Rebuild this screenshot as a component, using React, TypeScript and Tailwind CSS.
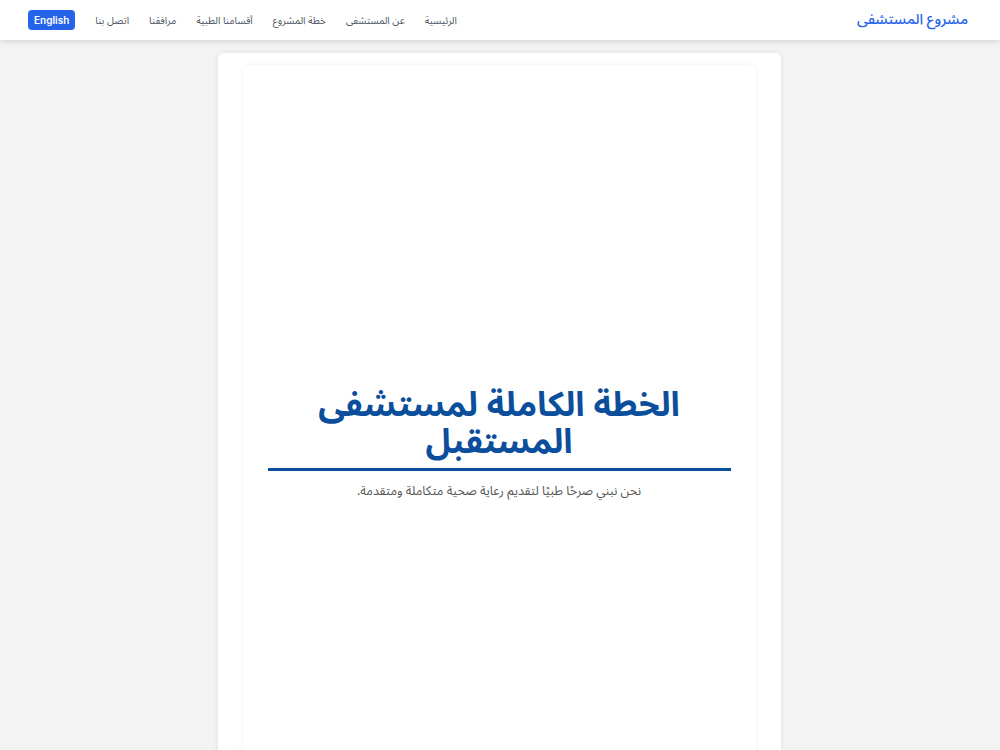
const links = ['الرئيسية', 'عن المستشفى', 'خطة المشروع', 'أقسامنا الطبية', 'مرافقنا', 'اتصل بنا'];

export default function App() {
  return (
    <div
      dir="rtl"
      className="min-h-screen bg-[#f3f3f3]"
      style={{ fontFamily: '"Noto Sans Arabic", "Noto Sans Arabic UI", "Noto Naskh Arabic", "DejaVu Sans", sans-serif' }}
    >
      <header className="h-10 bg-white shadow-[0_2px_6px_rgba(0,0,0,0.12)] flex items-center justify-between pr-8 pl-7 relative z-10">
        <a className="text-[14.5px] font-medium text-[#2563eb]">مشروع المستشفى</a>
        <div className="flex items-center">
          <nav className="flex items-center gap-5 ml-5">
            {links.map((l) => (
              <a key={l} className="text-[10px] text-[#4b5563]">
                {l}
              </a>
            ))}
          </nav>
          <button
            dir="ltr"
            className="h-5 px-[6px] rounded bg-[#2563eb] text-white text-[10px] font-semibold"
            style={{ fontFamily: 'Inter, "Liberation Sans", sans-serif' }}
          >
            English
          </button>
        </div>
      </header>
      <main className="flex justify-center pt-[13px]">
        <div className="w-[563px] -translate-x-[1px] bg-white rounded-md shadow-[0_0_6px_rgba(0,0,0,0.08)] px-[25px] pt-[12px]">
          <section className="min-h-[760px] rounded-md bg-white shadow-[0_0_5px_rgba(0,0,0,0.06)] flex flex-col items-center justify-center px-[25px] pb-[4px]">
            <h1 className="w-full text-center text-[34px] leading-[37px] font-bold text-[#0b4f9c] border-b-[3px] border-[#0b4f9c] pb-[7px] mt-[2px]">
              الخطة الكاملة لمستشفى المستقبل
            </h1>
            <p className="mt-[11px] text-[12.5px] text-[#555]">نحن نبني صرحًا طبيًا لتقديم رعاية صحية متكاملة ومتقدمة.</p>
          </section>
        </div>
      </main>
    </div>
  );
}
